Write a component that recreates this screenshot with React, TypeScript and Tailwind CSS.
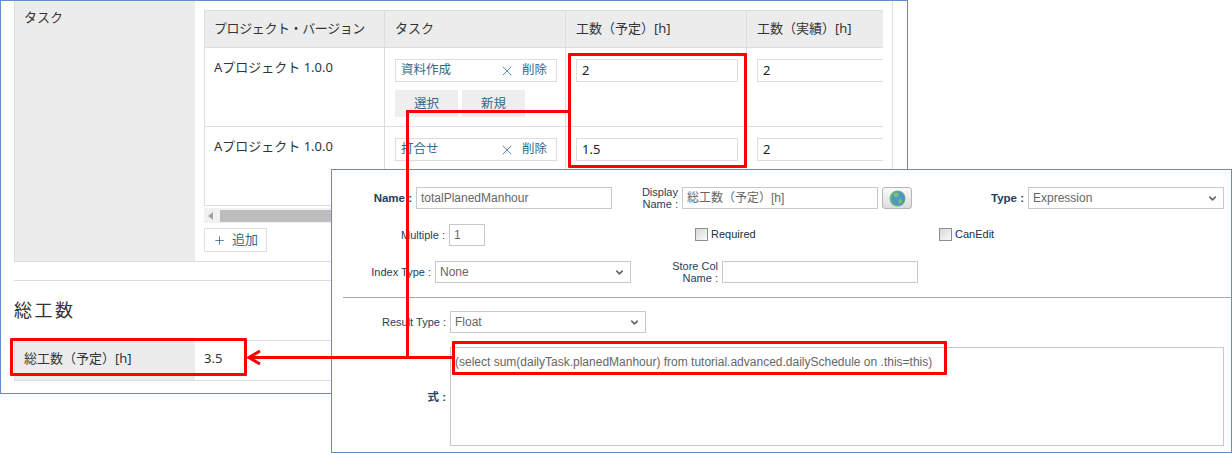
import { ChevronDown, Plus, X } from "lucide-react";

const cellFont = "font-['Noto_Sans','Noto_Sans_CJK_JP',sans-serif]";

function TaskInput({ name }: { name: string }) {
  return (
    <div className="flex h-[23px] w-[162px] items-center border border-[#dddddd] pl-[5px] pr-[9px] text-[12.5px] text-[#33688a]">
      <span>{name}</span>
      <X className="ml-auto h-[16px] w-[16px] text-[#5a8cab]" strokeWidth={1.5} />
      <span className="ml-[7px]">削除</span>
    </div>
  );
}

function NumberInput({ value }: { value: string }) {
  return (
    <div className="flex h-[23px] w-[162px] items-center border border-[#dddddd] pl-[5px] text-[13px] text-[#222222]">
      {value}
    </div>
  );
}

function TaskRow({ withButtons, actual, planned }: { withButtons: boolean; actual: string; planned: string }) {
  return (
    <div className="flex h-[79px] border-b border-[#dddddd]">
      <div className="w-[181px] shrink-0 border-x border-[#dddddd] px-[9px] pt-[10px] text-[13px] text-[#333333]">
        Aプロジェクト 1.0.0
      </div>
      <div className="w-[181px] shrink-0 border-r border-[#dddddd] pl-[10px] pt-[11px]">
        <TaskInput name={withButtons ? "資料作成" : "打合せ"} />
        {withButtons && (
          <div className="mt-2 flex gap-1">
            <div className="flex h-[27px] w-[63px] items-center justify-center bg-[#eeeeee] pt-px text-[12.5px] text-[#33688a]">選択</div>
            <div className="flex h-[27px] w-[63px] items-center justify-center bg-[#eeeeee] pt-px text-[12.5px] text-[#33688a]">新規</div>
          </div>
        )}
      </div>
      <div className="w-[181px] shrink-0 border-r border-[#dddddd] pl-[10px] pt-[11px]">
        <NumberInput value={planned} />
      </div>
      <div className="w-[181px] shrink-0 pl-[10px] pt-[11px]">
        <NumberInput value={actual} />
      </div>
    </div>
  );
}

function AppWindow() {
  return (
    <div className={`absolute left-0 top-0 h-[394px] w-[908px] border border-[#5b90d3] bg-white pl-[13px] pr-[14px] text-[#333333] ${cellFont}`}>
      <div className="flex h-[261px] border-b border-r border-[#dddddd]">
        <div className="w-[181px] shrink-0 border-l border-[#dddddd] bg-[#ececec] pl-[9px] pt-[7px] text-[13px]">タスク</div>
        <div className="min-w-0 flex-1 pl-[9px] pt-[9px]">
          <div className="w-[679px] overflow-hidden">
            <div className="flex h-[38px] w-[724px] border-b border-t border-[#dddddd] bg-[#ececec] text-[13px] leading-[34px]">
              <div className="w-[181px] shrink-0 border-x border-[#dddddd] pl-[9px] tracking-[-0.4px]">プロジェクト・バージョン</div>
              <div className="w-[181px] shrink-0 border-r border-[#dddddd] pl-[10px]">タスク</div>
              <div className="w-[181px] shrink-0 border-r border-[#dddddd] pl-[10px]">工数（予定）[h]</div>
              <div className="w-[181px] shrink-0 pl-[10px]">工数（実績）[h]</div>
            </div>
            <div className="w-[724px]">
              <TaskRow withButtons actual="2" planned="2" />
              <TaskRow withButtons={false} actual="2" planned="1.5" />
            </div>
          </div>
          <div className="mt-[2px] flex h-[15px] w-[679px] items-center bg-[#f1f1f1] pl-[4px]">
            <div className="h-0 w-0 border-y-[4px] border-r-[5px] border-y-transparent border-r-[#a3a3a3]" />
            <div className="ml-[7px] h-[12px] w-[400px] bg-[#bdbdbd]" />
          </div>
          <div className="mt-[5px] flex h-[24px] w-[63px] items-center justify-center gap-[6px] border border-[#dddddd] text-[13px] text-[#33688a]">
            <Plus className="h-[13px] w-[13px]" strokeWidth={1.5} />
            <span>追加</span>
          </div>
        </div>
      </div>
      <div className="mt-[18px] h-px bg-[#dddddd]" />
      <h2 className="mt-[16px] text-[18px] font-normal leading-[26px] tracking-[2.5px]">総工数</h2>
      <div className="mt-[17px] flex h-[41px] border-y border-[#dddddd] text-[13px]">
        <div className="flex w-[181px] shrink-0 items-center border-l border-[#dddddd] bg-[#ececec] pb-[3px] pl-[9px]">総工数（予定）[h]</div>
        <div className="flex items-center pb-[3px] pl-[9px]">3.5</div>
      </div>
    </div>
  );
}

function FormLabel({ width, bold, children }: { width: number; bold?: boolean; children: React.ReactNode }) {
  return (
    <div
      className={`mr-1 shrink-0 text-right leading-[12px] text-[#24405c] ${bold ? "text-[11.5px] font-bold" : "text-[11px]"}`}
      style={{ width }}
    >
      {children}
    </div>
  );
}

function TextBox({ value, width }: { value?: string; width: number }) {
  return (
    <div
      className="flex h-[22px] shrink-0 items-center border border-[#c8c8c8] pl-[4px] text-[12px] text-[#666666]"
      style={{ width }}
    >
      {value}
    </div>
  );
}

function SelectBox({ value }: { value: string }) {
  return (
    <div className="flex h-[22px] w-[196px] shrink-0 items-center justify-between border border-[#c8c8c8] px-[4px] text-[12px] text-[#666666]">
      <span>{value}</span>
      <ChevronDown className="mr-[1px] h-[11px] w-[11px] text-[#666666]" strokeWidth={3.5} />
    </div>
  );
}

function CheckBox({ label }: { label: string }) {
  return (
    <div className="-mt-px flex items-center gap-[3px] text-[11px] text-[#1f2d3d]">
      <div className="h-[13px] w-[13px] border border-[#8f8f8f] bg-gradient-to-br from-[#d8d8d8] to-[#fafafa]" />
      <span>{label}</span>
    </div>
  );
}

function GlobeButton() {
  return (
    <div className="ml-1 flex h-[22px] w-[30px] shrink-0 items-center justify-center rounded-[3px] border border-[#b5b5b5] bg-gradient-to-b from-[#fafafa] to-[#dcdcdc]">
      <svg width="17" height="17" viewBox="0 0 17 17">
        <defs>
          <radialGradient id="globe" cx="0.55" cy="0.5" r="0.6">
            <stop offset="0" stopColor="#4f9bdc" />
            <stop offset="0.6" stopColor="#4a97b8" />
            <stop offset="1" stopColor="#84cc62" />
          </radialGradient>
        </defs>
        <circle cx="8.5" cy="8.5" r="8" fill="url(#globe)" />
        <path d="M5 3.500c2-1 4-1 5 .5 .5 1-1 1.500-1.500 2.500-.5 1-2 1-3 .5-1-.5-1.500-2.500-.5-3.500z" fill="#7cc06f" />
        <path d="M10 9.500c1.500-.5 3 0 3 1.500 0 1.500-1.500 3-2.500 3-.5-1.500-1.500-3-.5-4.500z" fill="#7cc06f" />
      </svg>
    </div>
  );
}

function SchemaWindow() {
  return (
    <div className="absolute left-[331px] top-[169px] h-[284px] w-[901px] border border-[#5b90d3] bg-white pt-[17px] font-['Liberation_Sans','Noto_Sans_CJK_JP',sans-serif]">
      <div className="flex h-[22px] items-center">
        <FormLabel width={80} bold>Name :</FormLabel>
        <TextBox value="totalPlanedManhour" width={196} />
        <FormLabel width={66}>Display<br />Name :</FormLabel>
        <TextBox value="総工数（予定）[h]" width={196} />
        <GlobeButton />
        <FormLabel width={112} bold>Type :</FormLabel>
        <SelectBox value="Expression" />
      </div>
      <div className="mt-[15px] flex h-[22px] items-center">
        <FormLabel width={113}>Multiple :</FormLabel>
        <TextBox value="1" width={36} />
        <div className="ml-[210px] w-[244px]">
          <CheckBox label="Required" />
        </div>
        <CheckBox label="CanEdit" />
      </div>
      <div className="mt-[15px] flex h-[22px] items-center">
        <FormLabel width={99}>Index Type :</FormLabel>
        <SelectBox value="None" />
        <FormLabel width={87}>Store Col<br />Name :</FormLabel>
        <TextBox width={196} />
      </div>
      <div className="ml-[11px] mt-[14px] h-px bg-[#a8a8a8]" />
      <div className="mt-[13px] flex h-[22px] items-center">
        <FormLabel width={114}>Result Type :</FormLabel>
        <SelectBox value="Float" />
      </div>
      <div className="mt-[14px] flex items-center">
        <FormLabel width={114} bold>式 :</FormLabel>
        <div className="h-[99px] w-[774px] border border-[#c8c8c8] pl-[4px] pt-[5px] text-[12px] text-[#666666]">
          (select sum(dailyTask.planedManhour) from tutorial.advanced.dailySchedule on .this=this)
        </div>
      </div>
    </div>
  );
}

function Annotations() {
  return (
    <>
      <div className="absolute left-[568px] top-[53px] h-[115px] w-[179px] rounded-[1px] border-[3px] border-[#ff0000]" />
      <div className="absolute left-[10px] top-[338px] h-[38px] w-[237px] rounded-[1px] border-[3px] border-[#ff0000]" />
      <div className="absolute left-[452px] top-[341px] h-[34px] w-[495px] rounded-[1px] border-[3px] border-[#ff0000]" />
      <div className="absolute left-[406px] top-[110px] h-[3px] w-[163px] bg-[#ff0000]" />
      <div className="absolute left-[406px] top-[110px] h-[249px] w-[3px] bg-[#ff0000]" />
      <div className="absolute left-[250px] top-[356px] h-[3px] w-[203px] bg-[#ff0000]" />
      <svg className="absolute left-[246px] top-[349px]" width="16" height="17" viewBox="0 0 16 17">
        <path d="M14 2 L3 8.500 L14 15" fill="none" stroke="#ff0000" strokeWidth="3" />
      </svg>
    </>
  );
}

export default function App() {
  return (
    <div className="relative h-[453px] w-[1232px] overflow-hidden bg-white">
      <AppWindow />
      <SchemaWindow />
      <Annotations />
    </div>
  );
}
